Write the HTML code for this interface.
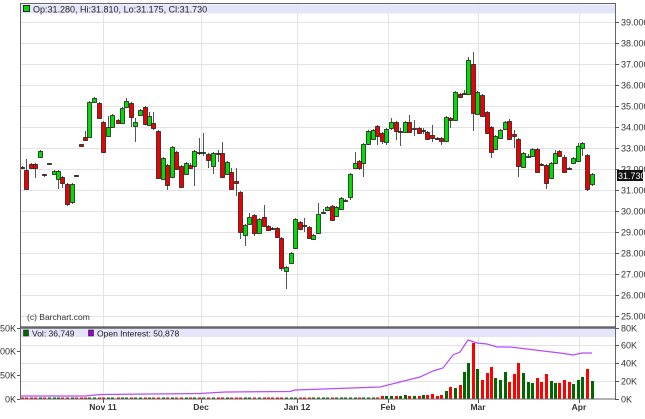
<!DOCTYPE html>
<html><head><meta charset="utf-8">
<style>
html,body{margin:0;padding:0;background:#fff;width:645px;height:419px;overflow:hidden}
svg text{font-family:"Liberation Sans",sans-serif;font-size:9px;fill:#333}
</style></head><body>
<svg id="s" width="645" height="419" xmlns="http://www.w3.org/2000/svg">
<rect x="0" y="0" width="645" height="419" fill="#fff"/>
<g id="grid"></g>
<rect x="20.5" y="4.5" width="595" height="9" fill="#e4e4fa"/>
<rect x="20.5" y="328" width="595" height="9" fill="#e4e4fa"/>
<g id="vol"></g>
<polyline id="oi" fill="none" stroke="#b44cff" stroke-width="1.2" points=""/>
<g id="cand"></g>
<rect x="20.5" y="3.5" width="595" height="323.5" fill="none" stroke="#666" stroke-width="1"/>
<line x1="20" y1="327.5" x2="616" y2="327.5" stroke="#222" stroke-width="2"/>
<rect x="20.5" y="327.5" width="595" height="71.5" fill="none" stroke="#666" stroke-width="1"/>
<rect x="23.5" y="5.5" width="6" height="6" fill="#00dd00" stroke="#222" stroke-width="1"/>
<text x="33" y="12.5" style="font-size:9px;fill:#222">Op:31.280, Hi:31.810, Lo:31.175, Cl:31.730</text>
<rect x="23.5" y="330" width="5" height="6" fill="#006600" stroke="#222" stroke-width="0.6"/>
<text x="32" y="336.5" style="font-size:8.5px;fill:#222">Vol: 36,749</text>
<rect x="88.5" y="330" width="5" height="6" fill="#9900cc" stroke="#222" stroke-width="0.6"/>
<text x="97" y="336.5" style="font-size:8.5px;fill:#222">Open Interest: 50,878</text>
<text x="27" y="320" style="font-size:8.5px;fill:#333">(c) Barchart.com</text>
<g id="labels"></g>
<rect x="617" y="170" width="26" height="11" fill="#111"/>
<text x="618" y="179" style="fill:#fff;font-size:9px">31.730</text>
</svg>
<script>
var NS="http://www.w3.org/2000/svg";
function el(p,t,a,txt){var e=document.createElementNS(NS,t);for(var k in a)e.setAttribute(k,a[k]);if(txt!==undefined)e.textContent=txt;document.getElementById(p).appendChild(e);return e;}
// price grid
for(var p=25;p<=39;p++){var y=22+(39-p)*21;
 el('grid','line',{x1:21,x2:615,y1:y+.5,y2:y+.5,stroke:'#e3e3e3','stroke-width':1});
 el('labels','line',{x1:615,x2:619,y1:y+.5,y2:y+.5,stroke:'#555'});
 el('labels','text',{x:621,y:y+3.5},p+'.000');}
var vx=[103,201,297,388,478,579],vl=['Nov 11','Dec','Jan 12','Feb','Mar','Apr'];
for(var i=0;i<vx.length;i++){
 el('grid','line',{x1:vx[i]+.5,x2:vx[i]+.5,y1:4,y2:399,stroke:'#e3e3e3','stroke-width':1});
 el('labels','line',{x1:vx[i]+.5,x2:vx[i]+.5,y1:399,y2:403,stroke:'#555'});
 el('labels','text',{x:vx[i],y:410,'text-anchor':'middle',style:'font-weight:bold;font-size:8.5px;fill:#333'},vl[i]);}
[[345,'60K'],[363,'40K'],[381,'20K']].forEach(function(a){el('grid','line',{x1:21,x2:615,y1:a[0]+.5,y2:a[0]+.5,stroke:'#e3e3e3'});});
[[328,'80K'],[345,'60K'],[363,'40K'],[381,'20K'],[399,'0K']].forEach(function(a){
 el('labels','line',{x1:615,x2:619,y1:a[0]+.5,y2:a[0]+.5,stroke:'#555'});
 el('labels','text',{x:621,y:a[0]+3.5},a[1]);});
[[328,'150K'],[351,'100K'],[375,'50K'],[399,'0K']].forEach(function(a){
 el('labels','line',{x1:17,x2:20,y1:a[0]+.5,y2:a[0]+.5,stroke:'#555'});
 el('labels','text',{x:16,y:a[0]+3.5,'text-anchor':'end'},a[1]);});
// candles [x,top,bottom,high,low,color]
var C=[
[22,167,168,166,169,'r'],[26,170,189,159,190,'r'],[31,164,168,163,169,'r'],[35,164,168,163,178,'r'],[40,151,157,150,158,'g'],
[44,174,175,174,177,'r'],[49,163,164,163,164,'g'],[54,171,174,170,175,'g'],[58,171,179,170,189,'g'],[62,177,183,176,188,'r'],
[67,184,204,183,206,'r'],[72,184,202,183,204,'g'],[76,175,176,175,176,'r'],[81,144,146,144,146,'r'],[85,137,140,131,141,'r'],
[89,102,137,101,138,'g'],[94,98,102,97,103,'g'],[99,103,118,102,119,'r'],[103,122,152,121,153,'r'],[108,127,136,116,137,'g'],
[112,115,127,114,128,'g'],[118,120,123,119,124,'r'],[122,108,123,107,124,'g'],[126,101,107,98,108,'g'],[131,103,117,102,127,'r'],
[135,122,126,118,142,'g'],[140,110,115,109,116,'g'],[145,107,124,106,125,'r'],[149,116,125,112,126,'g'],[153,123,128,112,130,'r'],
[158,131,178,130,179,'r'],[163,158,179,157,180,'g'],[167,165,185,164,190,'r'],[172,147,177,146,178,'g'],[176,152,169,151,170,'r'],
[181,166,187,165,188,'r'],[186,163,174,162,175,'g'],[190,165,168,163,169,'r'],[194,151,166,150,186,'g'],[199,152,153,138,155,'r'],
[203,152,153,133,156,'g'],[208,154,160,153,168,'r'],[213,153,166,152,174,'g'],[218,153,154,150,162,'r'],[222,153,177,142,178,'r'],
[227,162,174,161,175,'g'],[231,172,189,168,190,'r'],[236,181,183,168,196,'r'],[240,192,232,191,239,'r'],[245,225,235,224,246,'g'],
[249,217,224,213,225,'g'],[254,215,233,214,236,'r'],[259,219,233,218,234,'g'],[264,217,226,205,227,'r'],[268,226,230,225,231,'r'],
[272,228,229,227,230,'r'],[277,228,237,227,238,'r'],[281,238,268,237,271,'r'],[286,267,271,266,289,'g'],[291,253,263,252,264,'g'],
[295,219,248,218,249,'g'],[300,222,229,221,230,'r'],[304,225,226,218,232,'r'],[309,227,238,226,239,'r'],[313,235,239,234,240,'g'],
[318,214,233,203,234,'g'],[323,212,213,209,214,'g'],[327,207,210,206,211,'g'],[332,206,220,205,221,'r'],[336,207,216,206,217,'g'],
[341,198,209,197,210,'g'],[345,200,201,199,202,'g'],[350,174,197,173,200,'g'],[355,163,168,152,169,'g'],[359,161,168,160,170,'r'],
[363,144,163,143,177,'g'],[368,131,144,130,145,'g'],[373,130,139,129,140,'g'],[377,126,136,125,145,'r'],[382,133,141,132,144,'r'],
[386,129,142,128,145,'g'],[391,122,128,118,130,'g'],[396,122,131,121,140,'r'],[400,131,132,128,146,'g'],[405,122,132,121,133,'g'],
[409,122,132,115,133,'r'],[414,128,129,120,136,'g'],[419,128,133,127,134,'r'],[423,130,131,128,134,'g'],[427,132,139,131,140,'r'],
[432,135,138,125,142,'r'],[437,138,139,137,140,'r'],[441,138,141,137,145,'r'],[446,117,141,116,142,'g'],[450,118,120,117,128,'r'],
[455,92,120,91,121,'g'],[460,94,97,93,98,'r'],[464,93,94,90,95,'g'],[468,60,94,57,95,'g'],[473,64,113,52,131,'r'],
[477,92,114,91,115,'g'],[482,95,116,94,117,'r'],[487,112,133,111,134,'r'],[491,127,152,126,158,'r'],[495,136,149,135,150,'g'],
[500,130,138,129,139,'g'],[505,122,129,121,130,'g'],[509,121,139,119,140,'r'],[514,134,136,130,148,'r'],[518,139,166,138,177,'r'],
[523,153,167,152,168,'g'],[528,156,157,154,158,'g'],[532,149,156,148,157,'g'],[537,149,172,148,173,'r'],[541,164,165,163,166,'r'],
[546,165,183,164,189,'r'],[551,163,178,162,179,'g'],[555,153,163,150,164,'g'],[559,151,156,150,157,'r'],[564,157,172,155,173,'r'],
[569,168,169,167,170,'r'],[573,158,163,157,164,'g'],[578,146,161,143,162,'g'],[582,143,148,142,156,'g'],[587,155,189,154,191,'r'],
[592,174,184,173,186,'g']];
var V={405:4,409:3,413:2,418:3,423:4,427:4,432:5,437:3,441:4,446:8,450:12,455:11,460:14,464:27,468:36,473:56,477:30,482:19,487:26,491:32,495:21,500:19,505:27,509:17,514:25,518:36,523:26,528:17,532:16,537:21,541:17,546:25,551:18,555:16,559:16,564:19,569:17,573:15,578:19,582:22,587:30,592:18};
C.forEach(function(c){
 var x=c[0]+.5;
 el('cand','line',{x1:x,x2:x,y1:c[3],y2:c[4],stroke:'#555','stroke-width':1});
 el('cand','rect',{x:c[0]-1.5,y:c[1]+.5,width:4,height:Math.max(1,c[2]-c[1]),fill:c[5]=='g'?'#00dd00':'#ee0000',stroke:'#222','stroke-width':.8});
 var h=V[c[0]];if(h===undefined){h=c[0]>380?3:(c[0]>200?1.5:1.5);}
 el('vol','rect',{x:c[0]-1,y:399-h,width:3,height:h,fill:c[5]=='g'?'#006600':'#ff0000'});
});
var pts=[[21,396],[85,396],[100,394.5],[200,393.5],[225,392],[290,391.5],[295,390],[380,387],[400,382],[420,377],[433,371],[443,368],[453,355],[460,352],[468,340],[477,343],[487,344],[497,347],[510,347],[527,349],[543,351],[560,353],[573,355],[582,353],[592,353]];
document.getElementById('oi').setAttribute('points',pts.map(function(p){return p.join(',')}).join(' '));
</script>
</body></html>
